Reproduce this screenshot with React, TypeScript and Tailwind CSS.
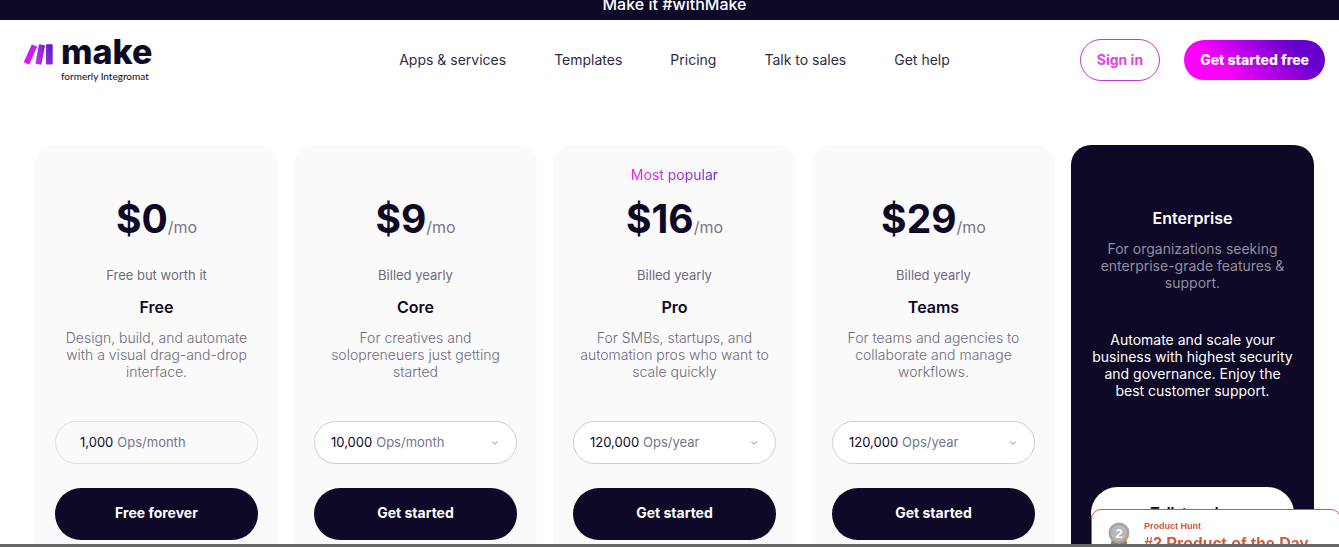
import { ChevronDown } from "lucide-react";

const links = ["Apps & services", "Templates", "Pricing", "Talk to sales", "Get help"];

const plans = [
  {
    name: "Free",
    price: "$0",
    billing: "Free but worth it",
    description: "Design, build, and automate with a visual drag-and-drop interface.",
    ops: ["1,000"],
    unit: "Ops/month",
    cta: "Free forever",
  },
  {
    name: "Core",
    price: "$9",
    billing: "Billed yearly",
    description: "For creatives and solopreneuers just getting started",
    ops: ["10,000"],
    unit: "Ops/month",
    selectable: true,
    cta: "Get started",
  },
  {
    name: "Pro",
    price: "$16",
    billing: "Billed yearly",
    description: "For SMBs, startups, and automation pros who want to scale quickly",
    ops: ["120,000"],
    unit: "Ops/year",
    selectable: true,
    popular: true,
    cta: "Get started",
  },
  {
    name: "Teams",
    price: "$29",
    billing: "Billed yearly",
    description: "For teams and agencies to collaborate and manage workflows.",
    ops: ["120,000"],
    unit: "Ops/year",
    selectable: true,
    cta: "Get started",
  },
];

type Plan = (typeof plans)[number];

function Logo() {
  return (
    <a href="#" className="flex items-start gap-2 justify-self-start" aria-label="make, formerly Integromat">
      <svg width="29" height="21" viewBox="0 0 29 21" className="mt-2" aria-hidden>
        <defs>
          <linearGradient id="mark" x1="0" y1="20" x2="29" y2="8" gradientUnits="userSpaceOnUse">
            <stop offset="0" stopColor="#ff00ff" />
            <stop offset="0.5" stopColor="#b02de9" />
            <stop offset="1" stopColor="#6021c3" />
          </linearGradient>
        </defs>
        <g fill="url(#mark)">
          <path d="M8.2.5 12.8 2.4Q13.300 2.700 13 3.300L5.400 20.100Q5.100 20.700 4.500 20.400L.4 18.500Q-.2 18.200.1 17.600L7.500.900Q7.800.300 8.200.500Z" />
          <path d="M15.500.300 20.500 1.200Q21.100 1.300 21 1.900L17.500 20.100Q17.400 20.800 16.800 20.700L12.100 19.800Q11.500 19.700 11.600 19.100L14.800.900Q14.900.200 15.500.300Z" />
          <rect x="22" y="0.200" width="6.700" height="20.300" rx="0.800" />
        </g>
      </svg>
      <span className="flex flex-col">
        <span className="text-[34px] leading-8 font-extrabold">make</span>
        <span className="font-['Lato',sans-serif] text-[10px] leading-4">formerly Integromat</span>
      </span>
    </a>
  );
}

function Header() {
  return (
    <header className="grid h-20 grid-cols-[1fr_auto_1fr] items-center pr-3.5 pl-6">
      <Logo />
      <nav className="flex gap-12 text-sm text-[#2f2b47]">
        {links.map((link) => (
          <a key={link} href="#">
            {link}
          </a>
        ))}
      </nav>
      <div className="flex items-center gap-6 justify-self-end text-sm">
        <a href="#" className="rounded-full border border-[#c43bc9] px-4 py-2.5 font-bold text-[#de45e3]">
          Sign in
        </a>
        <a
          href="#"
          className="rounded-full bg-[linear-gradient(45deg,#ff00ff_25%,#6600cc_80%)] px-4 py-2.5 font-extrabold text-white"
        >
          Get started free
        </a>
      </div>
    </header>
  );
}

function OpsPicker({ plan }: { plan: Plan }) {
  if (!plan.selectable) {
    return (
      <div className="flex h-[43px] items-center gap-1 rounded-full border border-[#e2e2e4] px-6 text-[13px]">
        <span>{plan.ops[0]}</span>
        <span className="text-[#77758a]">{plan.unit}</span>
      </div>
    );
  }
  return (
    <label className="flex h-[43px] items-center gap-1 rounded-full border border-[#cfcfd2] bg-white px-4 text-[13px]">
      <select className="field-sizing-content appearance-none bg-transparent" aria-label={`${plan.name} operations`}>
        {plan.ops.map((o) => (
          <option key={o}>{o}</option>
        ))}
      </select>
      <span className="text-[#77758a]">{plan.unit}</span>
      <ChevronDown className="ml-auto size-2.5 text-[#77758a]" />
    </label>
  );
}

function PlanCard({ plan }: { plan: Plan }) {
  return (
    <section className="flex flex-col rounded-t-[20px] bg-[#fafafa] p-5 text-center">
      <div className="h-5 text-sm leading-5">
        {plan.popular && (
          <span className="bg-linear-to-r from-[#ee22ee] to-[#7021c8] bg-clip-text text-transparent">Most popular</span>
        )}
      </div>
      <div className="mt-2.5 flex h-12 items-baseline justify-center leading-12">
        <span className="text-[39px] font-bold">{plan.price}</span>
        <span className="text-base leading-6 text-[#77758a]">/mo</span>
      </div>
      <p className="mt-[22px] text-[13px] leading-5 text-[#6d6b80]">{plan.billing}</p>
      <h2 className="mt-2.5 text-base leading-6 font-semibold">{plan.name}</h2>
      <p className="mt-2.5 mb-[41px] text-sm leading-[17px] font-light text-[#6d6b80]">{plan.description}</p>
      <OpsPicker plan={plan} />
      <button className="mt-6 h-[52px] rounded-full bg-[#0d0926] pb-0.5 text-sm font-bold text-white">{plan.cta}</button>
    </section>
  );
}

function EnterpriseCard() {
  return (
    <section className="flex flex-col rounded-t-[20px] bg-[#0d0926] px-5 pt-[61px] pb-5 text-center text-sm leading-[17px] text-white">
      <h2 className="text-base leading-6 font-semibold">Enterprise</h2>
      <p className="mt-2.5 text-[#918f9f]">For organizations seeking enterprise-grade features &amp; support.</p>
      <p className="mt-10">
        Automate and scale your business with highest security and governance. Enjoy the best customer support.
      </p>
      <button className="mt-auto h-[53px] rounded-full bg-white pb-0.5 font-bold text-[#0d0926]">Talk to sales</button>
    </section>
  );
}

function ProductHunt() {
  return (
    <a
      href="#"
      className="fixed -right-0.5 -bottom-4 flex h-[54px] w-[250px] gap-3.5 rounded-[10px] border border-[#da552f] bg-white pt-3 pl-4 font-['Liberation_Sans',sans-serif] font-bold text-[#da552f]"
    >
      <svg width="22" height="32" viewBox="0 0 22 32" aria-hidden>
        <path d="M4 17 1 29l5-2 4 4 1-10 1 10 4-4 5 2-3-12Z" fill="#c9701f" />
        <circle cx="11" cy="11" r="10.500" fill="#a5a5a5" />
        <circle cx="11" cy="11" r="8.500" fill="#b9b9b9" stroke="#989898" strokeWidth="0.600" />
        <text x="11" y="15.500" textAnchor="middle" fontSize="13" fill="#ffffff">
          2
        </text>
      </svg>
      <span className="flex flex-col">
        <span className="text-[9px] leading-2">Product Hunt</span>
        <span className="mt-1 text-base leading-5">#2 Product of the Day</span>
      </span>
    </a>
  );
}

export default function App() {
  return (
    <div className="h-screen overflow-hidden bg-white font-['Inter',sans-serif] text-[#0d0926]">
      <div className="flex h-5 items-end justify-center overflow-hidden bg-[#0d0926] pb-1 pl-2.5 text-base leading-6 font-medium text-white">
        Make it #withMake
      </div>
      <Header />
      <main className="grid grid-cols-5 gap-4 pt-[45px] pr-[25px] pl-[35px]">
        {plans.map((plan) => (
          <PlanCard key={plan.name} plan={plan} />
        ))}
        <EnterpriseCard />
      </main>
      <ProductHunt />
      <div className="fixed inset-x-0 bottom-0 h-[3px] bg-[#666666]" />
    </div>
  );
}
